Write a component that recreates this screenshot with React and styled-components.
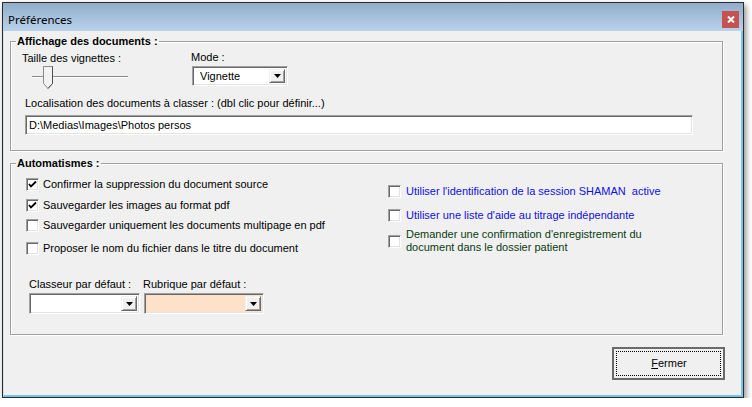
import React from 'react';
import styled, { createGlobalStyle } from 'styled-components';

const Global = createGlobalStyle`
  html, body { margin: 0; padding: 0; background: #fff; }
  body {
    font-family: "Liberation Sans", Tahoma, Arial, sans-serif;
    font-size: 11px;
    line-height: 13px;
    color: #000;
  }
  * { box-sizing: border-box; }
`;

const Window = styled.div`
  margin: 2px 0 0 2px;
  width: 742px;
  height: 396px;
  border: 1px solid #2b2b2b;
  box-shadow: 2px 3px 6px rgba(0, 0, 0, 0.45);
  display: flex;
  flex-direction: column;
  background: #f0f0f0;
`;

const TitleBar = styled.div`
  height: 28px;
  flex: none;
  background: linear-gradient(#91adca, #b9d3eb);
  display: flex;
  align-items: center;
  justify-content: space-between;
  padding: 4px 4px 0 5px;
`;

const Title = styled.span`
  font-family: "Noto Sans", "Open Sans", sans-serif;
  font-size: 11.5px;
  color: #000;
`;

const CloseButton = styled.button`
  width: 17px;
  height: 17px;
  padding: 0;
  border: none;
  background: #c75050;
  display: flex;
  align-items: center;
  justify-content: center;
`;

const Body = styled.div`
  flex: 1;
  display: flex;
  flex-direction: column;
  background: #f0f0f0;
  border-left: 1px solid #cfe4f2;
  border-right: 2px solid #78c4e9;
  border-bottom: 2px solid #78c4e9;
  padding: 4px 0 0 6px;
`;

const Group = styled.fieldset`
  margin: ${(p) => p.$mt || 0}px 0 0 0;
  padding: 0;
  width: 713px;
  border: 1px solid #a0a0a0;
  box-shadow: 1px 1px 0 #fff, inset 1px 1px 0 #fff;
`;

const Legend = styled.legend`
  margin-left: 5px;
  padding: 0 1px;
  font-weight: bold;
  line-height: 13px;
`;

const GroupContent = styled.div`
  display: flex;
  flex-direction: column;
  padding: ${(p) => p.$pad};
`;

const TopRow = styled.div`
  display: flex;
`;

const Col = styled.div`
  display: flex;
  flex-direction: column;
  width: ${(p) => (p.$w ? `${p.$w}px` : 'auto')};
  padding-left: ${(p) => p.$pl || 0}px;
`;

const Label = styled.span`
  display: block;
  white-space: nowrap;
  margin: ${(p) => p.$m || '0'};
`;

const SliderBox = styled.div`
  margin-top: 1px;
  margin-left: 10px;
  height: 24px;
`;

const Sunken = styled.div`
  display: flex;
  align-items: stretch;
  width: ${(p) => p.$w}px;
  height: ${(p) => p.$h}px;
  margin: ${(p) => p.$m || '0'};
  background: ${(p) => p.$bg || '#fff'};
  border: 1px solid;
  border-color: #a0a0a0 #fff #fff #a0a0a0;
  box-shadow: inset 1px 1px 0 #696969, inset -1px -1px 0 #e3e3e3;
  padding: 2px;
`;

const FieldText = styled.span`
  flex: 1;
  display: flex;
  align-items: center;
  padding-left: ${(p) => p.$pl || 1}px;
  white-space: nowrap;
  overflow: hidden;
`;

const ArrowButton = styled.span`
  width: 16px;
  flex: none;
  background: #f0f0f0;
  border: 1px solid;
  border-color: #f0f0f0 #696969 #696969 #f0f0f0;
  box-shadow: inset 1px 1px 0 #fff, inset -1px -1px 0 #a0a0a0;
  display: flex;
  align-items: center;
  justify-content: center;
`;

const AutoRow = styled.div`
  display: flex;
`;

const CheckRow = styled.div`
  display: flex;
  align-items: center;
  gap: ${(p) => p.$gap || 4}px;
  margin-top: ${(p) => p.$mt || 0}px;
  white-space: nowrap;
  color: ${(p) => p.$color || '#000'};
`;

const Box = styled.span`
  width: 13px;
  height: 13px;
  flex: none;
  background: #fff;
  border: 1px solid;
  border-color: #a0a0a0 #fff #fff #a0a0a0;
  box-shadow: inset 1px 1px 0 #696969, inset -1px -1px 0 #e3e3e3;
  display: flex;
  align-items: center;
  justify-content: center;
`;

const MultiLine = styled.span`
  white-space: normal;
  line-height: 13px;
`;

const ComboRow = styled.div`
  display: flex;
  margin-top: 23px;
  padding-left: 3px;
`;

const ComboCol = styled.div`
  display: flex;
  flex-direction: column;
  width: ${(p) => p.$w}px;
`;

const Footer = styled.div`
  display: flex;
  justify-content: flex-end;
  width: 715px;
  margin-top: 12px;
`;

const Button = styled.button`
  width: 113px;
  height: 33px;
  padding: 2px;
  background: #f0f0f0;
  border: 2px solid #6a6a6a;
  font: inherit;
  color: #000;
  display: flex;
`;

const FocusRing = styled.span`
  flex: 1;
  border: 1px dotted #000;
  display: flex;
  align-items: center;
  justify-content: center;
  padding-left: 1px;
`;

const Check = ({ checked }) => (
  <Box>
    {checked && (
      <svg width="9" height="9" viewBox="0 0 9 9">
        <path d="M1 4 L3 6.5 L8 1.5" fill="none" stroke="#000" strokeWidth="1.8" />
      </svg>
    )}
  </Box>
);

const DropArrow = () => (
  <svg width="7" height="4" viewBox="0 0 7 4">
    <path d="M0 0 H7 L3.5 4 Z" fill="#000" />
  </svg>
);

const Slider = () => (
  <svg width="100" height="24" viewBox="0 0 100 24">
    <line x1="0" y1="10.5" x2="96" y2="10.5" stroke="#8a8a8a" />
    <line x1="0" y1="11.5" x2="96" y2="11.5" stroke="#ffffff" />
    <path
      d="M11.5 0.5 H20.5 V17.5 L16 22.5 L11.5 17.5 Z"
      fill="#f2f2f2"
      stroke="#8a8a8a"
    />
    <path d="M20.5 0.5 V17.5 L16 22.5" fill="none" stroke="#505050" />
  </svg>
);

const Combo = ({ w, h, bg, text, m, pl }) => (
  <Sunken $w={w} $h={h} $bg={bg} $m={m}>
    <FieldText $pl={pl}>{text}</FieldText>
    <ArrowButton>
      <DropArrow />
    </ArrowButton>
  </Sunken>
);

export default function App() {
  return (
    <>
      <Global />
      <Window>
        <TitleBar>
          <Title>Préférences</Title>
          <CloseButton aria-label="Fermer">
            <svg width="8" height="7" viewBox="0 0 8 7">
              <path d="M1 0.5 L7 6.5 M7 0.5 L1 6.5" stroke="#fff" strokeWidth="2" />
            </svg>
          </CloseButton>
        </TitleBar>
        <Body>
          <Group>
            <Legend>Affichage des documents :</Legend>
            <GroupContent $pad="4px 0 15px 0">
              <TopRow>
                <Col $w={180} $pl={11}>
                  <Label>Taille des vignettes :</Label>
                  <SliderBox>
                    <Slider />
                  </SliderBox>
                </Col>
                <Col>
                  <Label $m="-1px 0 0 0">Mode :</Label>
                  <Combo w={96} h={20} text="Vignette" m="2px 0 0 1px" pl={5} />
                </Col>
              </TopRow>
              <Label $m="7px 0 0 14px">
                Localisation des documents à classer : (dbl clic pour définir...)
              </Label>
              <Sunken $w={668} $h={20} $m="5px 0 0 14px">
                <FieldText>D:\Medias\Images\Photos persos</FieldText>
              </Sunken>
            </GroupContent>
          </Group>

          <Group $mt={6}>
            <Legend>Automatismes :</Legend>
            <GroupContent $pad="8px 0 20px 0">
              <AutoRow>
                <Col $w={377} $pl={15}>
                  <CheckRow $gap={4}>
                    <Check checked />
                    Confirmer la suppression du document source
                  </CheckRow>
                  <CheckRow $gap={4} $mt={8}>
                    <Check checked />
                    Sauvegarder les images au format pdf
                  </CheckRow>
                  <CheckRow $gap={4} $mt={7}>
                    <Check />
                    Sauvegarder uniquement les documents multipage en pdf
                  </CheckRow>
                  <CheckRow $gap={4} $mt={10}>
                    <Check />
                    Proposer le nom du fichier dans le titre du document
                  </CheckRow>
                  <ComboRow>
                    <ComboCol $w={114}>
                      <Label>Classeur par défaut :</Label>
                      <Combo w={111} h={21} m="2px 0 0 0" />
                    </ComboCol>
                    <ComboCol $w={122}>
                      <Label>Rubrique par défaut :</Label>
                      <Combo w={120} h={21} bg="#fde1c9" m="2px 0 0 1px" />
                    </ComboCol>
                  </ComboRow>
                </Col>
                <Col $w={300}>
                  <CheckRow $gap={5} $mt={7} $color="#1010e0">
                    <Check />
                    Utiliser l'identification de la session SHAMAN&nbsp; active
                  </CheckRow>
                  <CheckRow $gap={5} $mt={11} $color="#1010e0">
                    <Check />
                    Utiliser une liste d'aide au titrage indépendante
                  </CheckRow>
                  <CheckRow $gap={5} $mt={6} $color="#0b3a12">
                    <Check />
                    <MultiLine>
                      Demander une confirmation d'enregistrement du
                      <br />
                      document dans le dossier patient
                    </MultiLine>
                  </CheckRow>
                </Col>
              </AutoRow>
            </GroupContent>
          </Group>

          <Footer>
            <Button>
              <FocusRing>
                <span>
                  <u>F</u>ermer
                </span>
              </FocusRing>
            </Button>
          </Footer>
        </Body>
      </Window>
    </>
  );
}
